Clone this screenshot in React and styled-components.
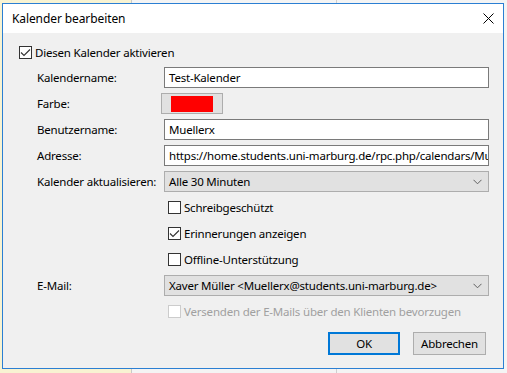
import styled, { createGlobalStyle } from "styled-components";

const GlobalStyle = createGlobalStyle`
  html, body {
    margin: 0;
    padding: 0;
  }
  body {
    width: 507px;
    height: 373px;
    overflow: hidden;
    font-family: "Noto Sans", "Liberation Sans", sans-serif;
    font-size: 11.5px;
    letter-spacing: -0.2px;
    color: #000;
    background: linear-gradient(
      to right,
      #f8f3d2 0 131px,
      #c9c9c9 131px 132px,
      #f4f4f4 132px 336px,
      #cfcfcf 336px 337px,
      #f4f4f4 337px
    );
  }
`;

const Window = styled.div`
  box-sizing: border-box;
  margin: 3px 0 0 2px;
  width: 502px;
  height: 366px;
  border: 1px solid #2b7fd3;
  background: #f0f0f0;
  display: flex;
  flex-direction: column;
`;

const TitleBar = styled.div`
  height: 29px;
  background: #fff;
  display: flex;
  align-items: center;
  justify-content: space-between;
  padding-left: 9px;
`;

const Title = styled.span`
  font-size: 12px;
  letter-spacing: -0.1px;
`;

const CloseButton = styled.div`
  width: 30px;
  height: 29px;
  display: flex;
  align-items: center;
  justify-content: center;
`;

const Body = styled.div`
  padding: 9px 14px 0 16px;
`;

const TopCheck = styled.div`
  height: 21px;
  display: flex;
  align-items: center;
  margin-bottom: 4px;
`;

const Form = styled.div`
  margin-left: 18px;
  display: grid;
  grid-template-columns: 127px 1fr;
  grid-auto-rows: 21px;
  row-gap: 5px;
`;

const Label = styled.div`
  display: flex;
  align-items: center;
  grid-column: 1;
  white-space: nowrap;
`;

const Field = styled.div`
  grid-column: 2;
  display: flex;
  align-items: center;
  padding-left: ${(p) => p.$indent || 0}px;
  min-width: 0;
`;

const TextBox = styled.div`
  box-sizing: border-box;
  width: 100%;
  height: 21px;
  border: 1px solid #7a7a7a;
  background: #fff;
  padding: 0 4px;
  display: flex;
  align-items: center;
  white-space: nowrap;
  overflow: hidden;
`;

const ComboBox = styled.div`
  box-sizing: border-box;
  width: 100%;
  height: 21px;
  border: 1px solid #adadad;
  background: #e1e1e1;
  padding: 0 6px 0 4px;
  display: flex;
  align-items: center;
  justify-content: space-between;
  white-space: nowrap;
`;

const ColorButton = styled.div`
  box-sizing: border-box;
  margin-left: -3px;
  width: 62px;
  height: 21px;
  border: 1px solid #adadad;
  background: #e1e1e1;
  display: flex;
  align-items: center;
  justify-content: center;
`;

const Swatch = styled.div`
  width: 42px;
  height: 16px;
  background: ${(p) => p.$color};
`;

const CheckRow = styled.label`
  display: flex;
  align-items: center;
  gap: 3px;
  color: ${(p) => (p.$disabled ? "#a0a0a0" : "#000")};
  white-space: nowrap;
`;

const Box = styled.span`
  box-sizing: border-box;
  width: 13px;
  height: 13px;
  border: 1px solid ${(p) => (p.$disabled ? "#cccccc" : "#333333")};
  background: #fff;
  display: flex;
  align-items: center;
  justify-content: center;
  flex: none;
`;

const Buttons = styled.div`
  display: flex;
  justify-content: flex-end;
  gap: 13px;
  margin-top: 10px;
  padding-right: 3px;
`;

const Button = styled.div`
  box-sizing: border-box;
  height: 23px;
  width: ${(p) => p.$width}px;
  background: #e1e1e1;
  border: ${(p) => (p.$default ? "2px solid #0078d7" : "1px solid #adadad")};
  display: flex;
  align-items: center;
  justify-content: center;
`;

const Check = () => (
  <svg width="11" height="11" viewBox="0 0 11 11">
    <path d="M1 5.5 L4 8.5 L10 2.5" fill="none" stroke="#333" strokeWidth="1.1" />
  </svg>
);

const Chevron = () => (
  <svg width="9" height="6" viewBox="0 0 9 6">
    <path d="M0.5 0.8 L4.5 4.8 L8.5 0.8" fill="none" stroke="#606060" strokeWidth="1" />
  </svg>
);

const Checkbox = ({ checked, disabled, children }) => (
  <CheckRow $disabled={disabled}>
    <Box $disabled={disabled}>{checked && <Check />}</Box>
    {children}
  </CheckRow>
);

const App = () => (
  <>
    <GlobalStyle />
    <Window>
      <TitleBar>
        <Title>Kalender bearbeiten</Title>
        <CloseButton>
          <svg width="11" height="11" viewBox="0 0 11 11">
            <path d="M0.5 0.5 L10.5 10.5 M10.5 0.5 L0.5 10.5" stroke="#000" strokeWidth="1" />
          </svg>
        </CloseButton>
      </TitleBar>
      <Body>
        <TopCheck>
          <Checkbox checked>Diesen Kalender aktivieren</Checkbox>
        </TopCheck>
        <Form>
          <Label>Kalendername:</Label>
          <Field>
            <TextBox>Test-Kalender</TextBox>
          </Field>

          <Label>Farbe:</Label>
          <Field>
            <ColorButton>
              <Swatch $color="#ff0000" />
            </ColorButton>
          </Field>

          <Label>Benutzername:</Label>
          <Field>
            <TextBox>Muellerx</TextBox>
          </Field>

          <Label>Adresse:</Label>
          <Field>
            <TextBox>https://home.students.uni-marburg.de/rpc.php/calendars/Muellerx/</TextBox>
          </Field>

          <Label>Kalender aktualisieren:</Label>
          <Field>
            <ComboBox>
              <span>Alle 30 Minuten</span>
              <Chevron />
            </ComboBox>
          </Field>

          <Field $indent={4}>
            <Checkbox>Schreibgeschützt</Checkbox>
          </Field>

          <Field $indent={4}>
            <Checkbox checked>Erinnerungen anzeigen</Checkbox>
          </Field>

          <Field $indent={4}>
            <Checkbox>Offline-Unterstützung</Checkbox>
          </Field>

          <Label>E-Mail:</Label>
          <Field>
            <ComboBox>
              <span>Xaver Müller &lt;Muellerx@students.uni-marburg.de&gt;</span>
              <Chevron />
            </ComboBox>
          </Field>

          <Field $indent={4}>
            <Checkbox disabled>Versenden der E-Mails über den Klienten bevorzugen</Checkbox>
          </Field>
        </Form>
        <Buttons>
          <Button $default $width={72}>OK</Button>
          <Button $width={73}>Abbrechen</Button>
        </Buttons>
      </Body>
    </Window>
  </>
);

export default App;
